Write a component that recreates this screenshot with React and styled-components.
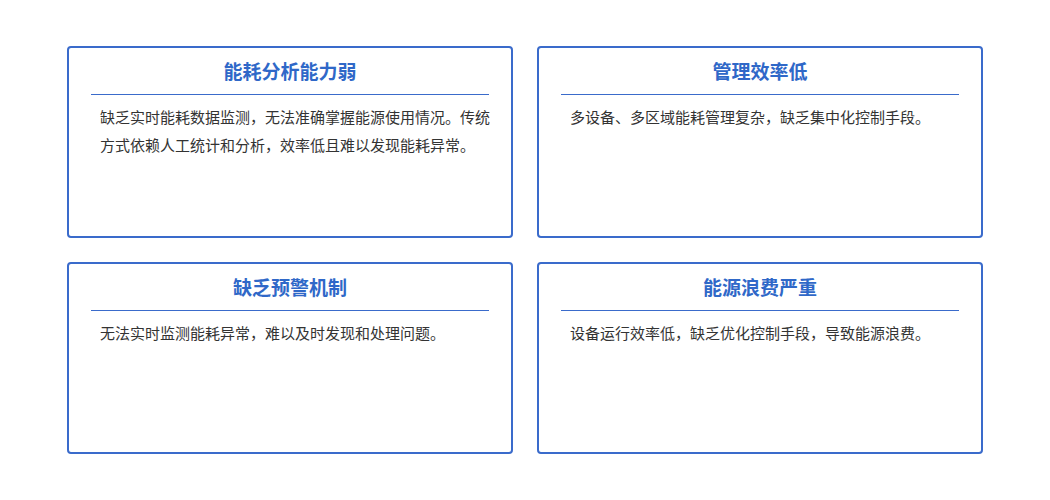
import React from 'react';
import styled, { createGlobalStyle } from 'styled-components';

const Global = createGlobalStyle`
  body { margin: 0; background: #fff; font-family: "Noto Sans CJK SC", "Noto Sans", sans-serif; }
`;

const Grid = styled.div`
  display: grid;
  grid-template-columns: 446px 446px;
  grid-auto-rows: 192px;
  gap: 24px;
  padding: 46px 0 0 67px;
`;

const Card = styled.div`
  box-sizing: border-box;
  border: 2px solid #3a6bcb;
  border-radius: 4px;
  padding: 0 22px;
`;

const Title = styled.h3`
  margin: 0;
  height: 46px;
  line-height: 46px;
  text-align: center;
  font-size: 19px;
  font-weight: 700;
  color: #2f68c8;
  border-bottom: 1.5px solid #3a6bcb;
`;

const Body = styled.p`
  margin: 8px -10px 0 0;
  padding: 0 0 0 9px;
  font-size: 15px;
  line-height: 28px;
  color: #333;
`;

const items = [
  ['能耗分析能力弱', '缺乏实时能耗数据监测，无法准确掌握能源使用情况。传统方式依赖人工统计和分析，效率低且难以发现能耗异常。'],
  ['管理效率低', '多设备、多区域能耗管理复杂，缺乏集中化控制手段。'],
  ['缺乏预警机制', '无法实时监测能耗异常，难以及时发现和处理问题。'],
  ['能源浪费严重', '设备运行效率低，缺乏优化控制手段，导致能源浪费。'],
];

export default function App() {
  return (
    <>
      <Global />
      <Grid>
        {items.map(([t, b]) => (
          <Card key={t}>
            <Title>{t}</Title>
            <Body>{b}</Body>
          </Card>
        ))}
      </Grid>
    </>
  );
}
